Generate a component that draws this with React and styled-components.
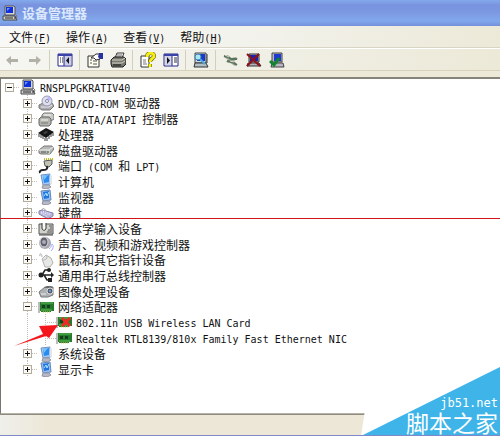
import React, { useState } from 'react'
import styled, { createGlobalStyle, css } from 'styled-components';

const GlobalStyle = createGlobalStyle`
  * {
    box-sizing: border-box;
  }

  body {
    margin: 0;
    background: #ece9d8;
    color: #111;
    font-family: "Noto Sans CJK SC", sans-serif;
    font-size: 12px;
  }
`

const Window = styled.main`
  position: relative;
  display: flex;
  flex-direction: column;
  min-height: 100vh;
  overflow: hidden;
  border-bottom: 1px solid #8088c8;
`

const TitleBar = styled.header`
  display: flex;
  align-items: center;
  gap: 4px;
  height: 26px;
  padding: 0 2px;
  background: linear-gradient(#83aaec 0, #7a93df 5px, #7b98e1 12px, #82a8ec 21px, #7590dc 26px);
`

const Title = styled.h1`
  margin: 0;
  color: #dce8fd;
  font-size: 13px;
  line-height: 20px;
`

const MenuBar = styled.nav`
  display: flex;
  align-items: center;
  gap: 15px;
  height: 22px;
  padding: 0 9px;
  border-bottom: 1px solid #d9d5c4;
  background: linear-gradient(90deg, #f8f8f6, #f3f3ee 45%, #ece9d8);
`

const MenuButton = styled.button`
  padding: 0;
  border: 0;
  background: none;
  color: #111;
  font: inherit;
  line-height: 18px;
  white-space: nowrap;
`

const Latin = styled.span`
  font-family: "DejaVu Sans Mono", monospace;
  font-size: 10px;
  line-height: 12px;
`

const ToolBar = styled.div`
  display: flex;
  align-items: center;
  height: 23px;
  border-top: 1px solid #fff;
  border-bottom: 1px solid #d8d2bd;
  background: linear-gradient(90deg, #f6f6f2, #f0efe5 55%, #ece9d8);
`

const ToolButton = styled.button`
  display: flex;
  align-items: center;
  justify-content: center;
  width: 23px;
  height: 20px;
  padding: 0;
  border: 0;
  background: none;
`

const Separator = styled.span`
  width: 1px;
  height: 20px;
  margin: 0 3px;
  background: #d3cfbd;
`

const TreePanel = styled.section`
  flex: 1;
  margin-top: 6px;
  padding: 0 4px;
  border-top: 2px solid #85837a;
  border-left: 1px solid #77756d;
  border-bottom: 1px solid #b5b2a5;
  background: #fff;
`

const Tree = styled.ul`
  margin: 0;
  padding: 0;
  list-style: none;
`

const Row = styled.li`
  display: flex;
  align-items: center;
  height: 16px;
  white-space: nowrap;

  &:nth-child(3n) {
    height: 15px;
  }
`

const dots = css`
  background-image: linear-gradient(#c4beb0 1px, transparent 1px);
  background-size: 1px 2px;
  background-repeat: repeat-y;
  background-position: 4px 0;
`

const Indent = styled.span`
  align-self: stretch;
  width: 18px;
  ${p => p.$line && dots}
`

const Branch = styled.span`
  display: flex;
  align-items: center;
  align-self: stretch;
  width: 15px;
  ${p => p.$line && dots}

  &::after {
    content: '';
    flex: 1;
    height: 1px;
    margin-left: ${p => p.$leaf ? 4 : 0}px;
    background: repeating-linear-gradient(90deg, #c4beb0 0 1px, transparent 1px 2px);
  }
`

const Toggle = styled.button`
  width: 9px;
  height: 9px;
  padding: 0;
  border: 1px solid #b0ab9a;
  background:
    linear-gradient(#111, #111) center / 5px 1px no-repeat,
    linear-gradient(#111, #111) center / 1px ${p => p.$open ? 0 : 5}px no-repeat,
    #fbfaf6;
`

const Label = styled.span`
  margin-left: 4px;
  line-height: 15px;
`

const StatusBar = styled.footer`
  height: 21px;
  border-top: 1px solid #8f8d83;
  background: linear-gradient(90deg, #efefeb, #ece7d6 50px);
`

const RedLine = styled.div`
  position: absolute;
  top: 218px;
  left: 0;
  right: 0;
  height: 1px;
  background: #d01518;
`

const Pointer = styled.svg`
  position: absolute;
  top: 323px;
  left: 12px;
`

const Watermark = styled.aside`
  position: absolute;
  right: 0;
  bottom: -1px;
  display: flex;
  flex-direction: column;
  align-items: flex-end;
  justify-content: flex-end;
  width: 139px;
  height: 70px;
  padding: 0 2px 1px 0;
  color: #fff;
`

const WatermarkShape = styled.svg`
  position: absolute;
  inset: 0;
`

const Site = styled.span`
  position: relative;
  font-family: "DejaVu Sans Mono", monospace;
  font-size: 12px;
  line-height: 12px;
`

const SiteName = styled.span`
  position: relative;
  font-size: 23px;
  line-height: 26px;
`

const drawings = {
  computer: <>
    <path d="M3 1h9l1 1v8H3z" fill="#d5d5d9" stroke="#555" />
    <path d="M4 2h7v6H4z" fill="#1030dc" />
    <path d="M5 3h3L5 6z" fill="#6c98ff" />
    <path d="M1 11h12l2 4H1z" fill="#d0d0cc" stroke="#444" />
    <path d="M3 13h8M12 13h2" stroke="#222" />
    <path d="M13 9l2 2-1 3" fill="none" stroke="#777" />
  </>,
  disc: <>
    <path d="M1 10l4-2h9l2 3-4 4H4l-3-2z" fill="#aaaab0" stroke="#777" />
    <path d="M3 12h8l3-2" fill="none" stroke="#eee" />
    <circle cx="9" cy="6" r="5" fill="#dedfef" stroke="#9898b0" />
    <path d="M9 6l1-5 4 3z" fill="#b9b9f6" />
    <circle cx="9" cy="6" r="1.5" fill="#fff" stroke="#8888a8" />
  </>,
  ide: <>
    <path d="M4 4l2-2h8l2 2v4l-3 2H4z" fill="#c9c9c5" stroke="#777" />
    <path d="M1 8l2-2h8l2 2v5l-2 2H2l-1-2z" fill="#b5b5b0" stroke="#666" />
    <path d="M3 9h7M6 4h7" stroke="#f4f4f2" />
    <path d="M3 12h7" stroke="#777" />
  </>,
  chip: <>
    <path d="M0 7l8-5 8 4-8 6z" fill="#161616" />
    <path d="M1 8v3M3 9v3M5 10v3M7 12v3M9 12v3M11 10v3M13 8v3M15 7v3" stroke="#333" />
    <path d="M5 7l3-2 2 1-3 2z" fill="#444" />
  </>,
  disk: <>
    <path d="M1 8l5-4h8l2 3-4 5H3l-2-1z" fill="#b9b9b9" stroke="#777" />
    <path d="M1 8h10l4-3M11 8v4" fill="none" stroke="#eee" />
    <path d="M3 10h5" stroke="#555" />
    <circle cx="10" cy="10" r="1" fill="#4c8f4c" />
  </>,
  port: <>
    <path d="M6 3l8-1v4l-3 3-4-1z" fill="#c3c3b4" stroke="#555" />
    <path d="M6 1h9" stroke="#c0c020" strokeDasharray="1 1" strokeWidth="2" />
    <path d="M9 8c1 4-2 4-4 4s-4 1-3 3" fill="none" stroke="#222" strokeWidth="2" />
  </>,
  monitor: <>
    <path d="M3 2l9-1 1 10-8 1z" fill="#a5c9f5" stroke="#6d93c5" />
    <path d="M5 3l6-1v7l-5 1z" fill="#278bf0" />
    <path d="M5 3l5-1-4 5z" fill="#78c2ff" />
    <path d="M12 1l2 2v8l-2 1z" fill="#e4e5e8" />
    <path d="M5 12h6l2 2-4 2-5-1z" fill="#b6b8c3" stroke="#9698a6" />
  </>,
  display: <>
    <path d="M3 2l9-1 1 10-8 1z" fill="#96bdf0" stroke="#6488ba" />
    <path d="M5 3l6-1v7l-5 1z" fill="#2176de" />
    <path d="M6 7l2-3 1 3 2-4" fill="none" stroke="#a5e4ff" />
    <path d="M5 12h6l2 2-4 2-5-1z" fill="#b8bac8" stroke="#9294a5" />
  </>,
  keyboard: <>
    <path d="M1 6l3-1 11 3v3l-5 3-9-5z" fill="#b5b4d8" stroke="#8583ad" />
    <path d="M3 7l9 3M5 6l8 3M3 8l7 4" stroke="#f4f4ff" strokeDasharray="1 1" />
    <path d="M4 5c1-3 3-1 4 1" fill="none" stroke="#999" />
  </>,
  hid: <>
    <path d="M1 4h14v10H1z" fill="#d2d2cd" stroke="#555" />
    <path d="M4 3v5c0 3 4 3 4 0V3" fill="#f8f8f4" stroke="#333" />
    <path d="M11 6h3M12 8h2M9 12h5M10 10h4" fill="none" stroke="#555" />
    <path d="M1 15h14" stroke="#444" />
  </>,
  sound: <>
    <circle cx="7" cy="7" r="6" fill="#aaaab3" />
    <ellipse cx="6" cy="6" rx="4" ry="5" fill="#62626f" stroke="#d9d9df" />
    <circle cx="6" cy="6" r="2" fill="#aaacba" />
    <path d="M12 7q3 3-1 6M14 8q3 3-1 7" fill="none" stroke="#a8a9f0" />
  </>,
  mouse: <>
    <path d="M4 5c0-4-3-4-2-1" fill="none" stroke="#aaa" />
    <path d="M4 7l4-4 5 3 2 5-3 4H7z" fill="#e7e7e5" stroke="#b1b1ad" />
    <path d="M5 8c3 0 4-1 4-4" fill="none" stroke="#bbb" />
  </>,
  usb: <>
    <path d="M1 8h13M4 8l3-5h3M6 8l3 5h3" fill="none" stroke="#222" strokeWidth="1.5" />
    <circle cx="3" cy="8" r="2.5" fill="#222" />
    <path d="M13 5l3 3-3 3z" fill="#222" />
    <circle cx="11" cy="3" r="2" fill="#222" />
    <path d="M10 11h4v4h-4z" fill="#222" />
  </>,
  camera: <>
    <path d="M1 9l6-5h8v8l-5 2H3z" fill="#aeb1b4" stroke="#777" />
    <path d="M6 5l3-2h4l2 2z" fill="#66696d" />
    <circle cx="12" cy="8" r="3" fill="#565b67" stroke="#ddd" />
    <circle cx="12" cy="8" r="1" fill="#67aaf0" />
    <path d="M3 11h5" stroke="#eee" />
  </>,
  network: <>
    <path d="M1 3v11" stroke="#777" />
    <path d="M2 3h14v9h-3v1H3v-1H2z" fill="#277b2c" />
    <path d="M3 4h12M3 11h11" stroke="#5ebc54" />
    <path d="M4 6h3v3H4zM9 6h3v3H9z" fill="#153f1b" />
    <path d="M5 13h7" stroke="#d2cf48" strokeDasharray="1 1" />
  </>,
  back: <path d="M2 8l5-4v3h7v3H7v3z" fill="#b1b1a7" />,
  forward: <path d="M14 8L9 4v3H2v3h7v3z" fill="#b1b1a7" />,
  treePane: <>
    <path d="M1 2h14v12H1z" fill="#fff" stroke="#26268b" />
    <path d="M1 3h14" stroke="#3a43a7" strokeWidth="2" />
    <path d="M7 4h7v9H7z" fill="#c9cbe7" />
    <path d="M3 6h3M3 8h3M3 10h3" stroke="#222" strokeDasharray="1 1" />
    <path d="M7 4v10" stroke="#26268b" />
    <path d="M12 5v7L9 8.500z" fill="#111" />
  </>,
  properties: <>
    <path d="M1 4h11v11H1z" fill="#fffef0" stroke="#333" />
    <path d="M3 8h2M3 11h2M6 9h4M6 12h4" stroke="#555" />
    <path d="M4 6l5-4h4v5l-4 1-2-2z" fill="#fff" stroke="#333" />
    <path d="M12 1h4v6h-3l-2-2z" fill="#28339b" />
  </>,
  printer: <>
    <path d="M5 6l2-5h7l-2 5z" fill="#fff" stroke="#333" />
    <path d="M7 3h5M6 5h5" stroke="#666" />
    <path d="M1 8l3-3h10l2 2v5l-3 3H2l-1-3z" fill="#77776e" stroke="#222" />
    <path d="M2 8h10l3-2M2 11h10l3-2" fill="none" stroke="#d5d5cc" />
    <path d="M3 13h8" stroke="#111" />
  </>,
  help: <>
    <path d="M1 4h8v11H1z" fill="#fff" stroke="#333" />
    <path d="M3 8h3M3 10h3M3 12h4" stroke="#777" />
    <path d="M7 5c0-5 7-5 7-1 0 3-4 2-4 6M10 12v3" fill="none" stroke="#4b4700" strokeWidth="4" />
    <path d="M7 5c0-5 7-5 7-1 0 3-4 2-4 6M10 12v3" fill="none" stroke="#f5ed16" strokeWidth="3" />
  </>,
  actionPane: <>
    <path d="M1 2h14v12H1z" fill="#fff" stroke="#26268b" />
    <path d="M1 3h14" stroke="#3a43a7" strokeWidth="2" />
    <path d="M2 4h7v9H2z" fill="#d4d5e8" />
    <path d="M9 4v10" stroke="#26268b" />
    <path d="M4 5v7l3-3.500z" fill="#111" />
    <path d="M11 6h3M11 8h3M11 10h3" stroke="#333" />
  </>,
  scan: <>
    <path d="M2 1h11v10H2z" fill="#cfd9e2" stroke="#444" />
    <path d="M4 2h8v7H4z" fill="#1839cc" />
    <path d="M2 11h11l2 4H1z" fill="#b2c0c4" stroke="#333" />
    <circle cx="5" cy="5" r="3" fill="#a9e8f5" stroke="#3c86ad" />
    <path d="M7 7l5 5" stroke="#4ba9e0" strokeWidth="2" />
    <path d="M14 2v9" stroke="#333" />
  </>,
  update: <>
    <path d="M1 5l4-2 3 3 5-1 2 2-4 2 3 3-2 2-5-3-4-1 2-2z" fill="#a8aaa0" />
    <path d="M1 4l4 1 3 2h6M4 9l5 1 5 3" fill="none" stroke="#58745b" strokeWidth="2" />
    <path d="M2 3l4 2M7 9l4 1" stroke="#daddd2" />
  </>,
  remove: <>
    <path d="M3 2h10v8H3zM2 11h11l2 3H1z" fill="#b2b2bd" stroke="#333" />
    <path d="M4 3h8v6H4z" fill="#1623b2" />
    <path d="M1 2l13 12M13 2L1 14" stroke="#8e1018" strokeWidth="2" />
  </>,
  enable: <>
    <path d="M3 1h10v9H3zM3 11h11l1 4H2z" fill="#b8b8c5" stroke="#444" />
    <path d="M5 2h7v7H5z" fill="#193bd0" />
    <path d="M1 9l4 4 5-7" fill="none" stroke="#12862e" strokeWidth="3" />
  </>,
}

const Icon = ({ name, off }) => (
  <svg width="16" height="16" viewBox="0 0 16 16" aria-hidden="true">
    {drawings[name]}
    {off && <path d="M6 4l8 8M14 4l-8 8" stroke="#ee2925" strokeWidth="3" />}
  </svg>
)

const menus = [
  ['文件', 'F'],
  ['操作', 'A'],
  ['查看', 'V'],
  ['帮助', 'H'],
]

const toolGroups = [
  [['back', '后退'], ['forward', '前进']],
  [['treePane', '显示控制台树']],
  [['properties', '属性'], ['printer', '打印']],
  [['help', '帮助'], ['actionPane', '显示操作窗格']],
  [['scan', '扫描硬件改动']],
  [['update', '更新驱动程序'], ['remove', '卸载'], ['enable', '启用']],
]

const devices = [
  { icon: 'disc', text: 'DVD/CD-ROM 驱动器' },
  { icon: 'ide', text: 'IDE ATA/ATAPI 控制器' },
  { icon: 'chip', text: '处理器' },
  { icon: 'disk', text: '磁盘驱动器' },
  { icon: 'port', text: '端口 (COM 和 LPT)' },
  { icon: 'monitor', text: '计算机' },
  { icon: 'display', text: '监视器' },
  { icon: 'keyboard', text: '键盘' },
  { icon: 'hid', text: '人体学输入设备' },
  { icon: 'sound', text: '声音、视频和游戏控制器' },
  { icon: 'mouse', text: '鼠标和其它指针设备' },
  { icon: 'usb', text: '通用串行总线控制器' },
  { icon: 'camera', text: '图像处理设备' },
  {
    icon: 'network',
    text: '网络适配器',
    children: [
      { icon: 'network', text: '802.11n USB Wireless LAN Card', off: true },
      { icon: 'network', text: 'Realtek RTL8139/810x Family Fast Ethernet NIC' },
    ],
  },
  { icon: 'monitor', text: '系统设备' },
  { icon: 'display', text: '显示卡' },
]

// the latin letters are half as wide as the chinese ones
const MixedText = ({ text }) => text.split(/([\x20-\x7e]+)/).filter(Boolean).map((part, i) =>
  /^[\x20-\x7e]/.test(part) ? <Latin key={i}>{part}</Latin> : part
)

const TreeRow = ({ item, depth, open, onToggle }) => (
  <Row>
    {depth > 0 && <Indent $line={false} />}
    {depth > 1 && <Indent $line />}
    <Branch $line={depth > 0} $leaf={depth > 1}>
      {depth < 2 && <Toggle $open={open} aria-label={item.text} aria-expanded={open} onClick={onToggle} />}
    </Branch>
    <Icon name={item.icon} off={item.off} />
    <Label><MixedText text={item.text} /></Label>
  </Row>
)

const App = () => {
  const [rootOpen, setRootOpen] = useState(true)
  const [opened, setOpened] = useState(['网络适配器'])

  const toggle = (text) => {
    setOpened(opened.includes(text) ? opened.filter(t => t !== text) : opened.concat(text))
  }

  const deviceRows = () => devices.flatMap(d => {
    const open = opened.includes(d.text)
    const row = <TreeRow key={d.text} item={d} depth={1} open={open} onToggle={() => toggle(d.text)} />
    const children = open && d.children ? d.children : []
    return [row, ...children.map(c => <TreeRow key={c.text} item={c} depth={2} />)]
  })

  return (
    <>
      <GlobalStyle />
      <Window>
        <TitleBar>
          <Icon name='computer' />
          <Title>设备管理器</Title>
        </TitleBar>
        <MenuBar>
          {menus.map(([name, letter]) => (
            <MenuButton key={letter}>{name}<Latin>(<u>{letter}</u>)</Latin></MenuButton>
          ))}
        </MenuBar>
        <ToolBar>
          {toolGroups.map((group, i) => (
            <React.Fragment key={i}>
              {i > 0 && <Separator />}
              {group.map(([icon, label]) => (
                <ToolButton key={icon} aria-label={label}><Icon name={icon} /></ToolButton>
              ))}
            </React.Fragment>
          ))}
        </ToolBar>
        <TreePanel>
          <Tree>
            <TreeRow
              item={{ icon: 'computer', text: 'RNSPLPGKRATIV40' }}
              depth={0}
              open={rootOpen}
              onToggle={() => setRootOpen(!rootOpen)}
            />
            {rootOpen && deviceRows()}
          </Tree>
        </TreePanel>
        <StatusBar />
        <RedLine />
        <Pointer width="50" height="26" viewBox="0 0 50 26" aria-hidden="true">
          <path d="M2 23L31 11l-4-8 19-1-9 13-3-2z" fill="#f5161b" />
        </Pointer>
        <Watermark>
          <WatermarkShape width="139" height="70" viewBox="0 0 139 70" aria-hidden="true">
            <path d="M4 44h135v26H0z" fill="#fff" />
            <path d="M0 70L139 1v69z" fill="#3fb4e8" />
          </WatermarkShape>
          <Site>jb51.net</Site>
          <SiteName>脚本之家</SiteName>
        </Watermark>
      </Window>
    </>
  )
}

export default App;
